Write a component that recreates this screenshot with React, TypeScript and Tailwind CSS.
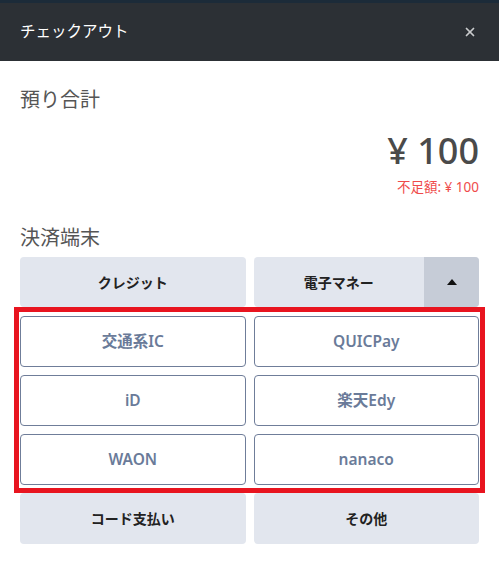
import { X } from 'lucide-react'

const brands = ['交通系IC', 'QUICPay', 'iD', '楽天Edy', 'WAON', 'nanaco']

export default function App() {
  return (
    <div className="w-[499px] h-[562px] bg-white font-['Noto_Sans','Noto_Sans_CJK_JP',sans-serif]">
      <div className="h-[3px] bg-[#1c2b39]" />
      <header className="h-[58px] bg-[#2c3035] flex items-center justify-between pl-5 pr-[22px]">
        <h1 className="text-[15.5px] text-white">チェックアウト</h1>
        <X size={14} strokeWidth={3} className="text-[#c9cbcd]" />
      </header>

      <main className="px-5">
        <div className="pt-[24px] text-[20px] leading-[30px] text-[#555]">預り合計</div>
        <div className="mt-[16px] text-right text-[36px] leading-[40px] font-medium text-[#4a4a4a]">¥&nbsp;100</div>
        <div className="mt-[7px] text-right text-[13.5px] leading-[18px] text-[#ef4b4b]">不足額: ¥ 100</div>

        <div className="mt-[27px] text-[20px] leading-[30px] text-[#555]">決済端末</div>
        <div className="mt-[4px] grid grid-cols-2 gap-x-2">
          <button className="h-[50px] rounded bg-[#e2e6ee] text-[14px] font-bold text-[#222]">クレジット</button>
          <div className="h-[50px] rounded bg-[#e2e6ee] flex overflow-hidden">
            <button className="flex-1 text-[14px] font-bold text-[#222]">電子マネー</button>
            <button className="w-[55px] bg-[#c6ccd7] flex items-center justify-center">
              <svg width="10" height="6" viewBox="0 0 10 6"><path d="M0 6 L5 0 L10 6 Z" fill="#111" /></svg>
            </button>
          </div>
        </div>

        <div className="-mx-[6px] border-[5px] border-[#e8141f] px-px pt-[4px] pb-[3px]">
          <div className="grid grid-cols-2 gap-2">
            {brands.map(b => (
              <button key={b}
                className="h-[51px] rounded border border-[#6f7d99] bg-white text-[15.5px] font-semibold text-[#6a7b99]">
                {b}
              </button>
            ))}
          </div>
        </div>

        <div className="grid grid-cols-2 gap-x-2">
          <button className="h-[51px] rounded bg-[#e2e6ee] text-[14px] font-bold text-[#222]">コード支払い</button>
          <button className="h-[51px] rounded bg-[#e2e6ee] text-[14px] font-bold text-[#222]">その他</button>
        </div>
      </main>
    </div>
  )
}
